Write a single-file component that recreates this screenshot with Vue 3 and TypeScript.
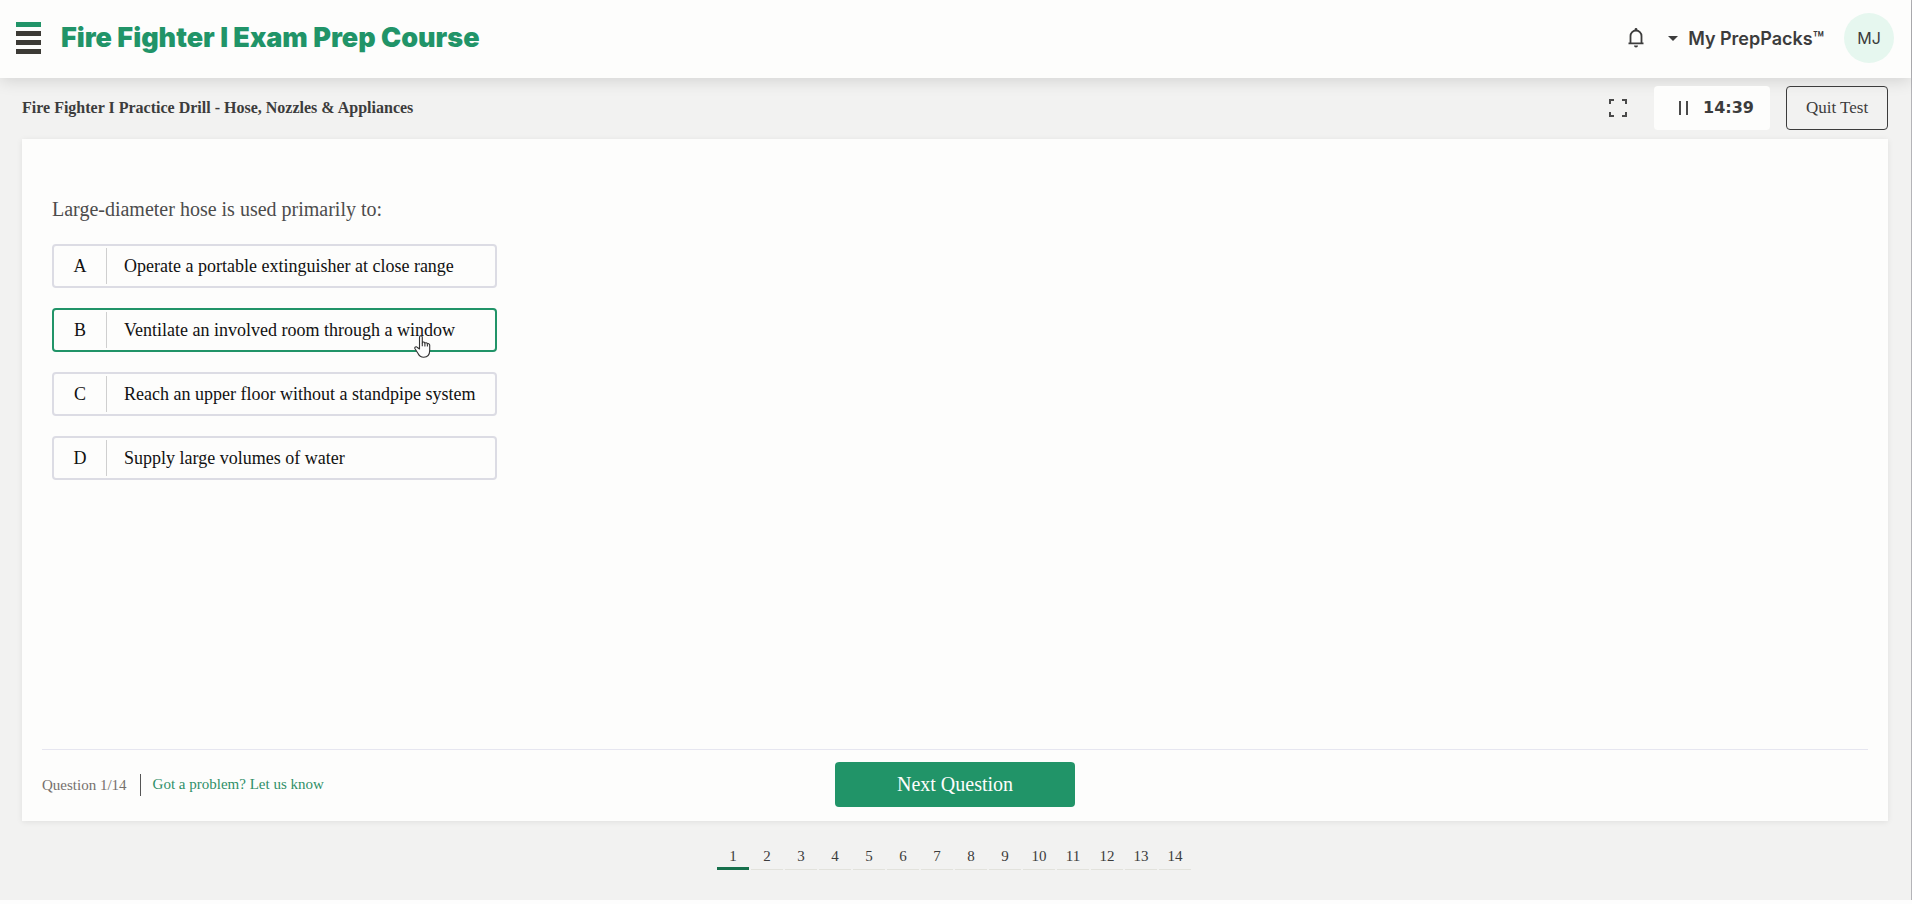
<script setup lang="ts">
import { ref } from 'vue'

interface Option {
  letter: string
  text: string
}

const options: Option[] = [
  { letter: 'A', text: 'Operate a portable extinguisher at close range' },
  { letter: 'B', text: 'Ventilate an involved room through a window' },
  { letter: 'C', text: 'Reach an upper floor without a standpipe system' },
  { letter: 'D', text: 'Supply large volumes of water' },
]
const selected = ref('B')
const total = 14
const current = ref(1)
</script>

<template>
  <div class="page">
    <header class="topbar">
      <button class="menu" aria-label="Menu">
        <span class="bar accent"></span>
        <span class="bar"></span>
        <span class="bar"></span>
        <span class="bar"></span>
      </button>
      <h1 class="brand">Fire Fighter I Exam Prep Course</h1>
      <button class="bell" aria-label="Notifications">
        <svg width="16" height="20" viewBox="0 0 16 20">
          <path d="M0.5 15.3h15M2.5 15V8a5.5 5.5 0 0 1 11 0v7" fill="none" stroke="#3c3c3c" stroke-width="1.8" />
          <path d="M6.6 2.6V1.4a1.4 1.4 0 0 1 2.8 0v1.2zM6 17.5h4a2 2 0 0 1-4 0z" fill="#3c3c3c" />
        </svg>
      </button>
      <button class="packs">
        <svg width="10" height="5" viewBox="0 0 10 5"><path d="M0 0h10L5 5z" fill="#3c3c3c" /></svg>
        <span>My PrepPacks™</span>
      </button>
      <button class="avatar">MJ</button>
    </header>

    <div class="drillbar">
      <h2 class="drill">Fire Fighter I Practice Drill - Hose, Nozzles &amp; Appliances</h2>
      <button class="full" aria-label="Full screen">
        <svg width="18" height="18" viewBox="0 0 18 18" fill="none" stroke="#4a4a4a" stroke-width="2">
          <path d="M1 5V1h4M13 1h4v4M17 13v4h-4M5 17H1v-4" />
        </svg>
      </button>
      <button class="timer">
        <svg width="10" height="14" viewBox="0 0 10 14"><path d="M0 0h2v14H0zM7 0h2v14H7z" fill="#4a4a4a" /></svg>
        <span>14:39</span>
      </button>
      <button class="quit">Quit Test</button>
    </div>

    <main class="card">
      <fieldset class="question">
        <legend>Large-diameter hose is used primarily to:</legend>
        <div class="options">
          <label v-for="o in options" :key="o.letter" class="option" :class="{ active: o.letter === selected }">
            <input v-model="selected" type="radio" name="answer" :value="o.letter" />
            <span class="letter">{{ o.letter }}</span>
            <span class="text">{{ o.text }}</span>
            <svg v-if="o.letter === selected" class="pointer" width="17" height="23" viewBox="0 0 17 23">
              <path
                d="M5.5 14V2.2c0-2 2.8-2 2.8 0V8c.3-1.4 2.5-1.2 2.6.4.4-1.1 2.4-.9 2.5.7.5-.9 2.3-.6 2.3 1v5.2c0 4-2 6.9-6 6.9-3.3 0-4.6-1.4-5.8-4L1 13.8c-.8-1.7 1.2-2.7 2.4-1.3z"
                fill="#fdfdfd" stroke="#333" stroke-width="1.1" stroke-linejoin="round" />
              <path d="M8.3 8v3.2M10.9 8.4v3M13.4 9.2v2.4" stroke="#333" stroke-width="1.1" />
            </svg>
          </label>
        </div>
      </fieldset>
      <footer class="foot">
        <div class="meta">
          <span class="count">Question {{ current }}/{{ total }}</span>
          <a href="#">Got a problem? Let us know</a>
        </div>
        <button class="next">Next Question</button>
      </footer>
    </main>

    <nav class="pager" aria-label="Questions">
      <button v-for="n in total" :key="n" :class="{ on: n === current }" @click="current = n">{{ n }}</button>
    </nav>
  </div>
</template>

<style>
body {
  margin: 0;
  background: #fdfdfd;
}
</style>

<style scoped>
.page {
  box-sizing: border-box;
  height: calc(100vh - 4px);
  display: flex;
  flex-direction: column;
  background: #f2f2f1;
  border-right: 1px solid #b4b4b8;
  font-family: "Liberation Serif", "Times New Roman", serif;
  color: #3c3c3c;
}
button {
  font: inherit;
  color: inherit;
  background: none;
  border: 0;
  padding: 0;
  cursor: pointer;
}
svg {
  display: block;
}
.topbar {
  display: flex;
  align-items: center;
  height: 78px;
  padding: 0 17px 2px 16px;
  box-sizing: border-box;
  background: #fdfdfc;
  box-shadow: 0 2px 16px rgba(0, 0, 0, 0.14);
  font-family: Inter, "Liberation Sans", sans-serif;
  font-optical-sizing: none;
}
.menu {
  display: flex;
  flex-direction: column;
  gap: 4px;
  width: 25px;
  margin-right: 20px;
}
.bar {
  height: 5px;
  background: #3c3a35;
}
.accent {
  background: #219468;
}
.brand {
  flex: 1;
  margin: 0;
  font-size: 27px;
  font-weight: 900;
  line-height: 36px;
  color: #219468;
}
.packs {
  display: flex;
  align-items: center;
  gap: 10px;
  margin: 0 20px 0 24px;
  font-size: 18px;
  font-weight: 600;
}
.avatar {
  width: 50px;
  height: 50px;
  border-radius: 50%;
  background: #e6f7ef;
  font-size: 16px;
}
.drillbar {
  display: flex;
  align-items: center;
  height: 61px;
  padding: 0 23px 2px 22px;
  box-sizing: border-box;
}
.drill {
  flex: 1;
  margin: 0;
  font-size: 16px;
  font-weight: 700;
}
.timer {
  display: flex;
  align-items: center;
  justify-content: center;
  gap: 14px;
  height: 44px;
  width: 116px;
  box-sizing: border-box;
  padding-left: 9px;
  margin: 0 16px 0 27px;
  border-radius: 4px;
  background: #fdfdfc;
  font-family: "DejaVu Sans", Verdana, sans-serif;
  font-size: 16px;
  font-weight: 700;
}
.quit {
  width: 102px;
  height: 44px;
  border: 1px solid #3c3c3c;
  border-radius: 4px;
  font-size: 17px;
}
.card {
  flex: 1;
  display: flex;
  flex-direction: column;
  margin: 0 23px 0 22px;
  background: #fdfdfc;
  box-shadow: 0 1px 6px rgba(0, 0, 0, 0.08);
}
.question {
  flex: 1;
  margin: 0;
  padding: 55px 30px 0;
  border: 0;
}
.question legend {
  float: left;
  width: 100%;
  padding: 0;
  font-size: 20px;
  line-height: 30px;
  margin-bottom: 20px;
  color: #4c4c4c;
}
.options {
  clear: both;
  display: grid;
  width: max-content;
  gap: 20px;
}
.option {
  position: relative;
  display: flex;
  align-items: center;
  height: 44px;
  box-sizing: border-box;
  border: 2px solid #dcdce4;
  border-radius: 4px;
  font-size: 18px;
  color: #111;
  cursor: pointer;
}
.option.active {
  border-color: #219468;
}
.option input {
  position: absolute;
  opacity: 0;
  margin: 0;
}
.letter {
  width: 52px;
  line-height: 36px;
  text-align: center;
  border-right: 1px solid #cfcfcf;
}
.text {
  padding: 0 20px 0 17px;
}
.pointer {
  position: absolute;
  right: 64px;
  bottom: -8px;
}
.foot {
  display: grid;
  grid-template-columns: 1fr auto 1fr;
  align-items: center;
  margin: 0 20px;
  padding: 12px 0 14px;
  border-top: 1px solid #e6e6f0;
}
.meta {
  display: flex;
  align-items: center;
  font-size: 15px;
}
.count {
  padding-right: 13px;
  margin-right: 12px;
  line-height: 22px;
  border-right: 1px solid #555;
  color: #75706c;
}
.meta a {
  color: #2f8f68;
  text-decoration: none;
}
.next {
  width: 240px;
  height: 45px;
  border-radius: 4px;
  background: #219468;
  color: #fdfdfc;
  font-size: 20px;
}
.pager {
  display: flex;
  justify-content: center;
  gap: 2px;
  height: 79px;
  padding: 21px 3px 0 0;
  box-sizing: border-box;
}
.pager button {
  width: 32px;
  height: 28px;
  box-sizing: border-box;
  padding-top: 2px;
  border-bottom: 1px solid #e2e2dc;
  font-size: 15px;
}
.pager .on {
  padding-top: 4px;
  border-bottom: 3px solid #16704c;
}
</style>
